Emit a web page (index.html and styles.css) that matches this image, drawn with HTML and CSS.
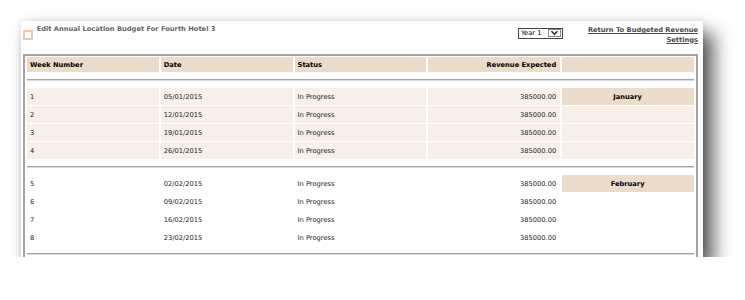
FILE: index.html
```html
<!DOCTYPE html>
<html>
<head>
<meta charset="utf-8">
<title>Edit Annual Location Budget</title>
<link rel="stylesheet" href="styles.css">
</head>
<body>
<div class="card">
  <div class="top">
    <div class="title">
      <span class="icon"></span>
      <span class="title-text">Edit Annual Location Budget For Fourth Hotel 3</span>
    </div>
    <div class="controls">
      <div class="select">
        <span class="sel-text">Year 1</span>
        <span class="sel-btn"><svg width="9" height="6" viewBox="0 0 9 6"><polyline points="1.5,1.2 4.5,4.3 7.5,1.2" fill="none" stroke="#1c2430" stroke-width="1.4"/></svg></span>
      </div>
      <a class="back" href="#">Return To Budgeted Revenue<br>Settings</a>
    </div>
  </div>
  <table class="budget">
    <thead>
      <tr><th>Week Number</th><th>Date</th><th>Status</th><th class="num">Revenue Expected</th><th></th></tr>
    </thead>
    <tbody>
      <tr class="sep"><td colspan="5"><hr></td></tr>
      <tr class="alt"><td>1</td><td>05/01/2015</td><td>In Progress</td><td class="num">385000.00</td><td class="month">January</td></tr>
      <tr class="alt"><td>2</td><td>12/01/2015</td><td>In Progress</td><td class="num">385000.00</td><td></td></tr>
      <tr class="alt"><td>3</td><td>19/01/2015</td><td>In Progress</td><td class="num">385000.00</td><td></td></tr>
      <tr class="alt"><td>4</td><td>26/01/2015</td><td>In Progress</td><td class="num">385000.00</td><td></td></tr>
      <tr class="sep"><td colspan="5"><hr></td></tr>
      <tr><td>5</td><td>02/02/2015</td><td>In Progress</td><td class="num">385000.00</td><td class="month">February</td></tr>
      <tr><td>6</td><td>09/02/2015</td><td>In Progress</td><td class="num">385000.00</td><td></td></tr>
      <tr><td>7</td><td>16/02/2015</td><td>In Progress</td><td class="num">385000.00</td><td></td></tr>
      <tr><td>8</td><td>23/02/2015</td><td>In Progress</td><td class="num">385000.00</td><td></td></tr>
      <tr class="sep"><td colspan="5"><hr></td></tr>
    </tbody>
  </table>
</div>
</body>
</html>
```
FILE: styles.css
```css
html, body {
  margin: 0;
  padding: 0;
  background: #ffffff;
}

body {
  font-family: "DejaVu Sans", Verdana, sans-serif;
  font-size: 6.7px;
  color: #222222;
}

.card {
  margin: 21px 0 0 21px;
  width: 682px;
  height: 236px;
  box-sizing: border-box;
  padding: 0 5px 0 1px;
  overflow: hidden;
  background: #ffffff;
  box-shadow: 10px 12px 18px rgba(0, 0, 0, 0.68), 0 0 6px rgba(0, 0, 0, 0.12);
}

.top {
  display: flex;
  justify-content: space-between;
  align-items: flex-start;
  height: 33px;
  box-sizing: border-box;
  padding-top: 4px;
}

.title {
  display: flex;
  align-items: flex-start;
  gap: 4px;
  padding-left: 0.7px;
}

.icon {
  width: 10px;
  height: 10px;
  box-sizing: border-box;
  margin-top: 5px;
  border: 2px solid #ecc8ac;
  background: #fff;
}

.title-text {
  font-weight: bold;
  color: #666666;
  line-height: 9.5px;
}

.controls {
  display: flex;
  align-items: flex-start;
  gap: 25px;
}

.select {
  display: flex;
  align-items: center;
  justify-content: space-between;
  width: 45px;
  height: 11px;
  box-sizing: border-box;
  margin-top: 2.7px;
  border: 1px solid #444;
  background: #fff;
  padding: 0 1px 0 2px;
}

.sel-text {
  color: #000;
  line-height: 9px;
}

.sel-btn {
  display: flex;
  align-items: center;
  justify-content: center;
  width: 13px;
  height: 8px;
  box-sizing: border-box;
  border: 1px solid #7d8a99;
  background: #fff;
}

.back {
  display: block;
  margin-top: 1px;
  text-align: right;
  font-weight: bold;
  color: #4a4a4a;
  line-height: 9.5px;
  text-decoration: underline;
}

.budget {
  margin-left: 1px;
  width: 675px;
  table-layout: fixed;
  border: 2px solid #a3a3a3;
  border-spacing: 2px 1px;
}

.budget th {
  height: 15px;
  padding: 0 4px 0 3px;
  background: #ecdbc9;
  font-weight: bold;
  color: #000;
  text-align: left;
}

.budget td {
  height: 17px;
  padding: 0 4px 0 3px;
  color: #1a1a1a;
}

.budget .num {
  text-align: right;
}

.budget tr.alt td {
  background: #f8efe8;
}

.budget tr.alt td.month,
.budget td.month {
  background: #ecdbc9;
  text-align: center;
  font-weight: bold;
  color: #000;
}

.budget tr.sep td {
  height: 14px;
  padding: 0;
  background: transparent;
}

.budget hr {
  margin: 0;
  height: 0;
  border: none;
  border-top: 1px solid #a3a3a3;
  border-bottom: 1px solid #dadada;
}
```
